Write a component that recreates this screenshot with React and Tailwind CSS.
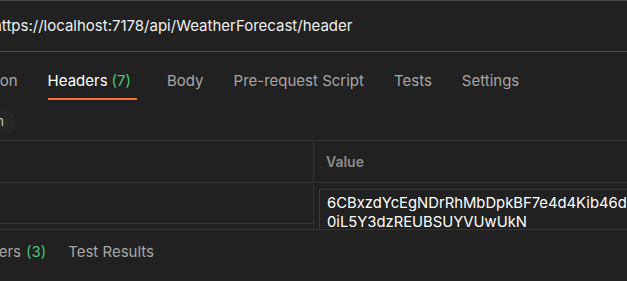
import React from 'react';

const tabs = [
  { key: 'auth', label: 'Authorization' },
  { key: 'headers', label: 'Headers', count: 7 },
  { key: 'body', label: 'Body' },
  { key: 'pre', label: 'Pre-request Script' },
  { key: 'tests', label: 'Tests' },
  { key: 'settings', label: 'Settings' },
];

const EyeOff = () => (
  <svg width="14" height="14" viewBox="0 0 24 24" fill="none" stroke="currentColor" strokeWidth="2" strokeLinecap="round" strokeLinejoin="round">
    <path d="M17.94 17.94A10.07 10.07 0 0 1 12 20c-7 0-11-8-11-8a18.45 18.45 0 0 1 5.06-5.94" />
    <path d="M9.9 4.24A9.12 9.12 0 0 1 12 4c7 0 11 8 11 8a18.5 18.5 0 0 1-2.16 3.19" />
    <path d="M1 1l22 22" />
  </svg>
);

const App = () => {
  return (
    <div
      className="w-[627px] h-[281px] overflow-hidden bg-[#212121] text-[#e8e8e8]"
      style={{ fontFamily: 'Inter, "Noto Sans", sans-serif' }}
    >
      {/* URL bar */}
      <div className="h-[52px] border-t border-b border-[#4a4a4a] flex items-center overflow-hidden">
        <span className="-ml-[7px] whitespace-nowrap text-[15px] text-[#f0f0f0]">
          https://localhost:7178/api/WeatherForecast/header
        </span>
      </div>

      {/* Request tabs */}
      <div className="h-[48px] flex items-start overflow-hidden">
        <div className="flex gap-[30px] -ml-[77px] whitespace-nowrap text-[15px] pt-[18px]">
          {tabs.map((t) => (
            <div
              key={t.key}
              className={
                t.key === 'headers'
                  ? 'h-[30px] pr-[6px] border-b-[2px] border-[#ff6c37] text-white'
                  : 'h-[30px] text-[#a6a6a6]'
              }
            >
              {t.label}
              {t.count != null && <span className="ml-[4px] text-[#49c47a]">({t.count})</span>}
            </div>
          ))}
        </div>
      </div>

      {/* Sub toolbar */}
      <div className="h-[41px] border-b border-[#333] flex items-center pt-[3px]">
        <div className="w-[16px] h-[26px] flex justify-end overflow-hidden">
          <div className="shrink-0 h-[26px] rounded-full bg-[#262626] flex items-center gap-[5px] pl-[10px] pr-[12px] text-[13px] text-[#c8c8c8] whitespace-nowrap">
            <EyeOff />
            <span>7 hidden</span>
          </div>
        </div>
      </div>

      {/* Headers table */}
      <div className="h-[88px] overflow-hidden">
        <div className="grid grid-cols-[314px_1fr] h-[42px] border-b border-[#333]">
          <div className="border-r border-[#333]" />
          <div className="flex items-center pl-[12px] text-[14px] font-semibold text-[#8c8c8c]">Value</div>
        </div>
        <div className="grid grid-cols-[314px_1fr] h-[60px]">
          <div className="h-[41px] border-b border-[#333] border-r" />
          <div className="pl-[5px] pt-[6px] border-l border-[#333] -ml-px">
            <div className="border border-[#3a3a3a] border-r-0 pl-[7px] pt-[4px] text-[14.8px] leading-[19px] text-white whitespace-nowrap overflow-hidden">
              <div>6CBxzdYcEgNDrRhMbDpkBF7e4d4Kib46d0CNBZ</div>
              <div>0iL5Y3dzREUBSUYVUwUkN</div>
            </div>
          </div>
        </div>
      </div>

      {/* Response tabs */}
      <div className="h-[51px] border-t border-[#333] flex items-start pt-[11px] overflow-hidden">
        <div className="flex gap-[22px] -ml-[39px] whitespace-nowrap text-[15px] text-[#a6a6a6]">
          <div>
            Headers<span className="ml-[5px] text-[#49c47a]">(3)</span>
          </div>
          <div>Test Results</div>
        </div>
      </div>
    </div>
  );
};

export default App;
